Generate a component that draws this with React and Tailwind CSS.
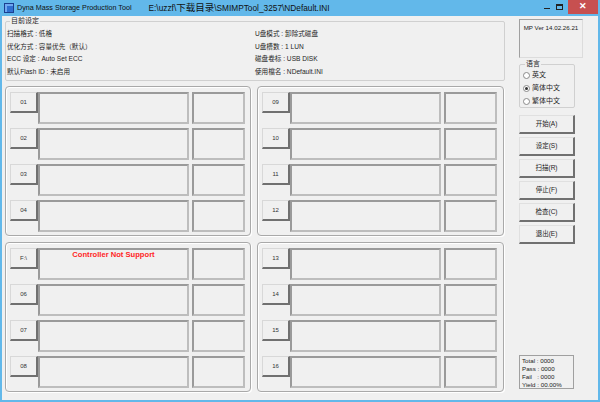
import React from "react";

// 下位机槽位：编号按钮 + 状态框 + 结果框
const Slot = ({ label, msg }) => (
  <div className="flex h-[32px] gap-[3px]">
    <div className="flex w-[179px]">
      <div className="flex h-[21px] w-[28px] shrink-0 items-center justify-center border border-t-[#d8d8d8] border-l-[#d8d8d8] border-r-2 border-b-2 border-r-[#707070] border-b-[#707070] bg-[#f0f0f0] text-[6px] text-[#333]">
        {label}
      </div>
      <div className="flex-1 border-2 border-t-[#9a9a9a] border-l-[#9a9a9a] border-r-[#bdbdbd] border-b-[#bdbdbd] bg-[#f0f0f0]">
        {msg && (
          <div className="text-center text-[7.6px] font-bold leading-[10px] text-[#ff1f1f]">
            {msg}
          </div>
        )}
      </div>
    </div>
    <div className="w-[53px] border-2 border-t-[#9a9a9a] border-l-[#9a9a9a] border-r-[#bdbdbd] border-b-[#bdbdbd] bg-[#f0f0f0]" />
  </div>
);

const Panel = ({ slots }) => (
  <div className="flex h-[150px] flex-col gap-[4px] rounded-[4px] border border-[#a9a9a9] pl-[4px] pt-[5px] shadow-[inset_1px_1px_0_#ffffff,1px_1px_0_#ffffff]">
    {slots.map((s) => (
      <Slot key={s.label} label={s.label} msg={s.msg} />
    ))}
  </div>
);

const SideButton = ({ children }) => (
  <button className="flex h-[19px] w-[56px] items-center justify-center border border-t-[#e0e0e0] border-l-[#e0e0e0] border-r-2 border-b-2 border-r-[#707070] border-b-[#707070] bg-[#f0f0f0] text-[6.5px] text-[#222]">
    {children}
  </button>
);

const Radio = ({ label, checked }) => (
  <div className="flex h-[13px] items-center gap-[2px]">
    <span className="flex h-[7px] w-[7px] items-center justify-center rounded-full border border-[#8a8a8a] bg-white">
      {checked && <span className="h-[3px] w-[3px] rounded-full bg-[#333]" />}
    </span>
    <span className="text-[7px]">{label}</span>
  </div>
);

const settingsLeft = [
  "扫描格式 : 低格",
  "优化方式 : 容量优先（默认）",
  "ECC 设定 : Auto Set ECC",
  "默认Flash ID : 未启用",
];

const settingsRight = [
  "U盘模式 : 卸除式磁盘",
  "U盘槽数 : 1 LUN",
  "磁盘卷标 : USB DISK",
  "使用檔名 : NDefault.INI",
];

const App = () => {
  return (
    <div className="flex h-[402px] w-[600px] flex-col bg-[#62b8ea] px-[2px] pb-[2px] font-[Liberation_Sans,Noto_Sans_CJK_SC,sans-serif] text-[#1e1e1e]">
      {/* 标题栏 */}
      <div className="flex h-[16px] shrink-0 items-center">
        <div className="ml-[2px] h-[10px] w-[10px] border border-[#1b3f8f] bg-[#2f6fd0] shadow-[inset_2px_2px_0_#6fa8f0]" />
        <span className="ml-[3px] text-[7.2px] text-[#111]">
          Dyna Mass Storage Production Tool
        </span>
        <span className="ml-[17px] text-[8.3px] text-[#111]">
          E:\uzzf\<span className="text-[9.5px]">下载目录</span>\SMIMPTool_3257\NDefault.INI
        </span>
        <div className="ml-auto flex h-full items-start">
          <div className="flex h-[14px] w-[13px] items-center justify-center">
            <span className="mt-[3px] h-[1px] w-[6px] bg-[#222]" />
          </div>
          <div className="flex h-[14px] w-[13px] items-center justify-center">
            <span className="h-[6px] w-[7px] border border-t-2 border-[#222]" />
          </div>
          <div className="ml-[2px] flex h-[14px] w-[30px] items-center justify-center bg-[#c75050] text-[9px] font-bold text-white">
            ✕
          </div>
        </div>
      </div>

      {/* 主体 */}
      <div className="flex flex-1 bg-[#f0f0f0]">
        <div className="w-[505px] pl-[3px]">
          <fieldset className="h-[65px] w-[500px] rounded-[2px] border border-[#d0d0d0] pl-[1px]">
            <legend className="ml-[3px] px-[1px] text-[7px] leading-[10px]">目前设定</legend>
            <div className="grid grid-cols-[248px_1fr] pt-[2px] text-[6.6px] leading-[12.7px]">
              <div>
                {settingsLeft.map((t) => (
                  <div key={t}>{t}</div>
                ))}
              </div>
              <div>
                {settingsRight.map((t) => (
                  <div key={t}>{t}</div>
                ))}
              </div>
            </div>
          </fieldset>

          <div className="mt-[5px] grid grid-cols-[246px_247px] gap-[6px]">
            <Panel slots={[{ label: "01" }, { label: "02" }, { label: "03" }, { label: "04" }]} />
            <Panel slots={[{ label: "09" }, { label: "10" }, { label: "11" }, { label: "12" }]} />
            <Panel
              slots={[
                { label: "F:\\", msg: "Controller Not Support" },
                { label: "06" },
                { label: "07" },
                { label: "08" },
              ]}
            />
            <Panel slots={[{ label: "13" }, { label: "14" }, { label: "15" }, { label: "16" }]} />
          </div>
        </div>

        <div className="ml-[12px] flex w-[64px] flex-col">
          <div className="mt-[3px] h-[39px] border border-t-[#a0a0a0] border-l-[#a0a0a0] border-r-[#dcdcdc] border-b-[#dcdcdc] pt-[3px] text-center text-[6.2px] text-[#222]">
            MP Ver 14.02.26.21
          </div>

          <fieldset className="mt-[1px] h-[49px] w-[56px] rounded-[2px] border border-[#d0d0d0] pl-[3px]">
            <legend className="ml-[2px] px-[1px] text-[7px] leading-[10px]">语言</legend>
            <Radio label="英文" />
            <Radio label="简体中文" checked />
            <Radio label="繁体中文" />
          </fieldset>

          <div className="mt-[7px] flex flex-col gap-[3px]">
            <SideButton>开始(A)</SideButton>
            <SideButton>设定(S)</SideButton>
            <SideButton>扫描(R)</SideButton>
            <SideButton>停止(F)</SideButton>
            <SideButton>检查(C)</SideButton>
            <SideButton>退出(E)</SideButton>
          </div>

          <div className="mb-[11px] mt-auto h-[34px] w-[55px] border border-[#a0a0a0] pl-[2px] pt-[1px] text-[6.2px] leading-[8px] text-[#222]">
            <div>Total : 0000</div>
            <div>Pass : 0000</div>
            <div>Fail&nbsp;&nbsp;&nbsp;: 0000</div>
            <div>Yield : 00.00%</div>
          </div>
        </div>
      </div>
    </div>
  );
};

export default App;
